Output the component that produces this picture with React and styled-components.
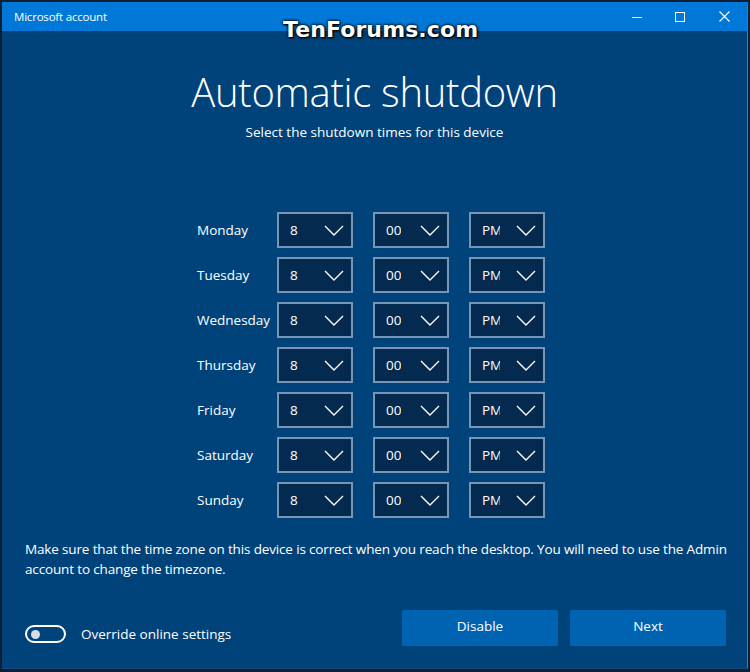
import React from 'react';
import styled, { createGlobalStyle } from 'styled-components';

const GlobalStyle = createGlobalStyle`
  html, body {
    margin: 0;
    padding: 0;
    background: #0d1f36;
  }
  body {
    font-family: "Open Sans", "Noto Sans", sans-serif;
  }
`;

const days = ['Monday', 'Tuesday', 'Wednesday', 'Thursday', 'Friday', 'Saturday', 'Sunday'];

function App() {
  return (
    <>
      <GlobalStyle />
      <StScreen>
        <StWindow>
          <StTitleBar>
            <StTitle>Microsoft account</StTitle>
            <StWindowButtons>
              <StWinBtn>
                <svg width="10" height="10" viewBox="0 0 10 10">
                  <path d="M0 5.5h10" stroke="#fff" strokeWidth="1" />
                </svg>
              </StWinBtn>
              <StWinBtn>
                <svg width="10" height="10" viewBox="0 0 10 10">
                  <rect x="0.5" y="0.5" width="9" height="9" fill="none" stroke="#fff" strokeWidth="1" />
                </svg>
              </StWinBtn>
              <StWinBtn>
                <svg width="11" height="11" viewBox="0 0 11 11">
                  <path d="M0.5 0.5l10 10M10.5 0.5l-10 10" stroke="#fff" strokeWidth="1.1" />
                </svg>
              </StWinBtn>
            </StWindowButtons>
          </StTitleBar>
          <StWatermark>TenForums.com</StWatermark>

          <StBody>
            <StHeading>Automatic shutdown</StHeading>
            <StSubtitle>Select the shutdown times for this device</StSubtitle>

            <StGrid>
              {days.map((day) => (
                <React.Fragment key={day}>
                  <StDay>{day}</StDay>
                  <Select value="8" />
                  <Select value="00" />
                  <Select value="PM" clip />
                </React.Fragment>
              ))}
            </StGrid>

            <StNote>
              Make sure that the time zone on this device is correct when you reach the desktop. You will need to use the Admin
              account to change the timezone.
            </StNote>

            <StFooter>
              <StToggleRow>
                <StToggle>
                  <StKnob />
                </StToggle>
                <span>Override online settings</span>
              </StToggleRow>
              <StButtons>
                <StButton>Disable</StButton>
                <StButton>Next</StButton>
              </StButtons>
            </StFooter>
          </StBody>
        </StWindow>
      </StScreen>
    </>
  );
}

const Select = ({ value, clip }) => {
  return (
    <StSelect>
      <StSelectValue $clip={clip}>{value}</StSelectValue>
      <svg width="20" height="11" viewBox="0 0 20 11">
        <path d="M1 1l9 9 9-9" fill="none" stroke="#fff" strokeWidth="1.4" />
      </svg>
    </StSelect>
  );
};

const StScreen = styled.div`
  width: 750px;
  height: 672px;
  padding: 2px 2px 3px 2px;
  box-sizing: border-box;
  background: #0d1f36;
`;

const StWindow = styled.div`
  position: relative;
  height: 100%;
  display: flex;
  flex-direction: column;
  background: #00437a;
  border-right: 1px solid #3a7ab8;
  border-bottom: 1px solid #1c4a78;
  box-sizing: border-box;
`;

const StTitleBar = styled.div`
  height: 29px;
  flex-shrink: 0;
  background: #0078d7;
  display: flex;
  align-items: center;
  justify-content: space-between;
  color: #fff;
`;

const StTitle = styled.div`
  font-size: 11.5px;
  padding-left: 12px;
  letter-spacing: -0.2px;
`;

const StWindowButtons = styled.div`
  display: flex;
  height: 100%;
`;

const StWinBtn = styled.div`
  width: 43px;
  height: 100%;
  display: flex;
  align-items: center;
  justify-content: center;
  &:last-child {
    width: 46px;
  }
`;

const StWatermark = styled.div`
  position: absolute;
  top: 15px;
  left: 281px;
  font-family: "DejaVu Sans", sans-serif;
  font-weight: bold;
  font-size: 22px;
  color: #fff;
  letter-spacing: 0.1px;
  text-shadow: 0 0 3px #000, 0 0 3px #000, 1px 1px 2px #000;
`;

const StBody = styled.div`
  flex: 1;
  display: flex;
  flex-direction: column;
  color: #fff;
`;

const StHeading = styled.h1`
  margin: 34px 0 0;
  text-align: center;
  font-weight: 300;
  font-size: 40px;
  line-height: 54px;
  letter-spacing: -0.3px;
`;

const StSubtitle = styled.div`
  text-align: center;
  font-size: 13.5px;
  line-height: 20px;
  margin-top: 3px;
`;

const StGrid = styled.div`
  display: grid;
  grid-template-columns: 60px 76px 76px 76px;
  column-gap: 20px;
  row-gap: 9px;
  align-items: center;
  margin: 70px 0 0 195px;
`;

const StDay = styled.div`
  font-size: 13.5px;
  white-space: nowrap;
`;

const StSelect = styled.div`
  height: 36px;
  box-sizing: border-box;
  border: 2px solid #7895b5;
  background: #052a50;
  display: flex;
  align-items: center;
  justify-content: space-between;
  padding: 0 7px 0 11px;
  font-size: 13.5px;
`;

const StSelectValue = styled.span`
  display: inline-block;
  overflow: hidden;
  white-space: nowrap;
  width: ${(p) => (p.$clip ? '18px' : 'auto')};
`;

const StNote = styled.p`
  margin: 21px 20px 0 23px;
  font-size: 13.5px;
  line-height: 20px;
  letter-spacing: -0.15px;
`;

const StFooter = styled.div`
  display: flex;
  align-items: center;
  justify-content: space-between;
  margin: 31px 21px 0 23px;
`;

const StToggleRow = styled.div`
  display: flex;
  align-items: center;
  gap: 15px;
  font-size: 13.5px;
  margin-top: 12px;
`;

const StToggle = styled.div`
  width: 41px;
  height: 18px;
  box-sizing: border-box;
  border: 2px solid #fff;
  border-radius: 10px;
  display: flex;
  align-items: center;
  padding-left: 4px;
`;

const StKnob = styled.div`
  width: 9px;
  height: 9px;
  border-radius: 50%;
  background: #d6dde6;
`;

const StButtons = styled.div`
  display: flex;
  gap: 12px;
`;

const StButton = styled.button`
  width: 156px;
  height: 36px;
  border: none;
  background: #0063b1;
  color: #fff;
  font-family: "Open Sans", "Noto Sans", sans-serif;
  font-size: 13.5px;
  padding: 0 0 4px;
`;

export default App;
